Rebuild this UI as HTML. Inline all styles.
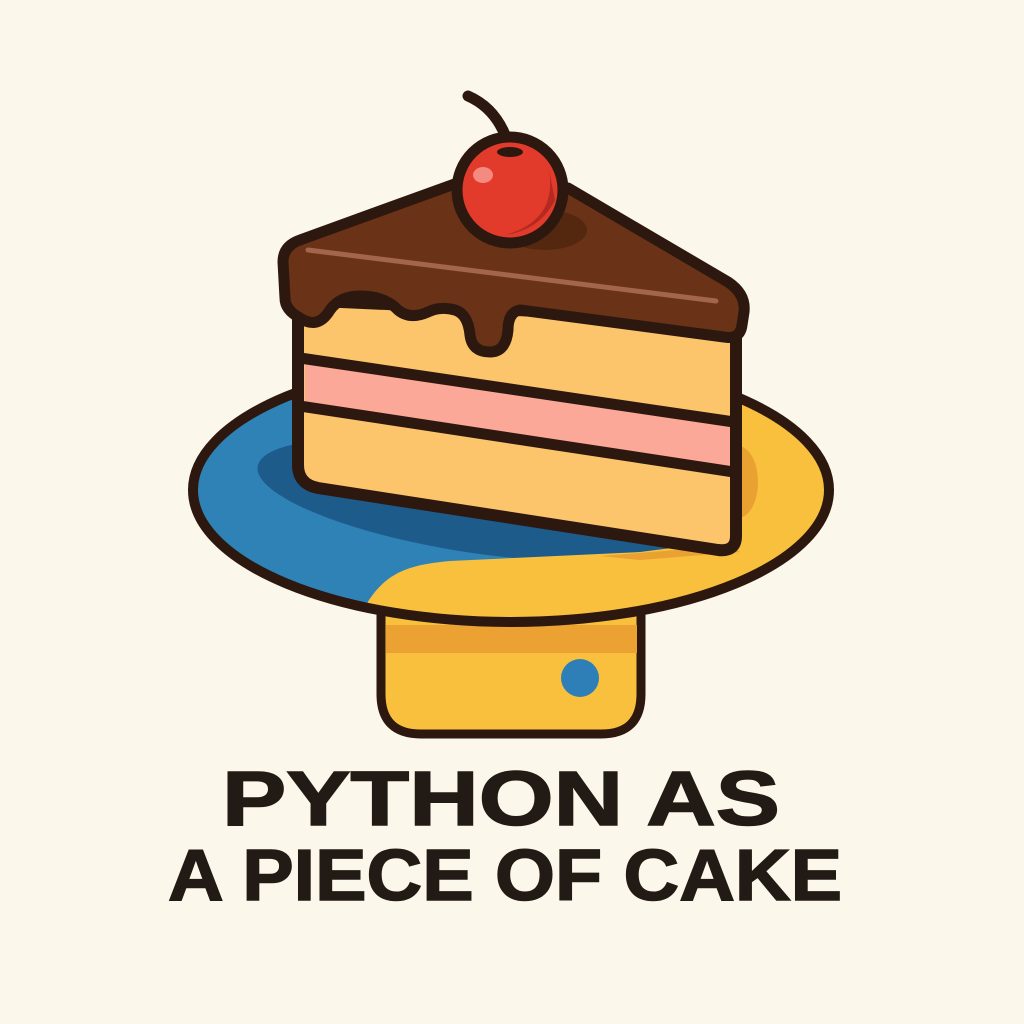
<!DOCTYPE html>
<html><head><meta charset="utf-8"><style>
html,body{margin:0;padding:0;background:#fcf7eb;}
svg{display:block}
</style></head><body>
<svg width="1024" height="1024" viewBox="0 0 1024 1024" xmlns="http://www.w3.org/2000/svg">
<rect width="1024" height="1024" fill="#fcf7eb"/>
<defs>
<clipPath id="plate"><ellipse cx="511" cy="490" rx="318" ry="132"/></clipPath>
</defs>
<!-- base -->
<path d="M381,600 L641,600 L641,694 Q641,734 601,734 L421,734 Q381,734 381,694 Z" fill="#f9c03e" stroke="#2d1810" stroke-width="9"/>
<rect x="386" y="625" width="251" height="28" fill="#eba233"/>
<circle cx="580" cy="678" r="19" fill="#2e7fb8"/>
<!-- plate -->
<ellipse cx="511" cy="490" rx="318" ry="132" fill="#2f82b6"/>
<g clip-path="url(#plate)">
<ellipse cx="470" cy="500" rx="215" ry="52" transform="rotate(9 470 500)" fill="#1d5b8b"/>
<path d="M362,612 C382,574 405,565 450,561 L640,552 L735,540 L740,300 L900,300 L900,720 L340,720 Z" fill="#f9c03e"/>
<ellipse cx="738" cy="482" rx="20" ry="36" fill="#e9a131"/>
<path d="M600,556 L730,546 L740,552 L640,560 Z" fill="#e9a131"/>
</g>
<ellipse cx="511" cy="490" rx="318" ry="132" fill="none" stroke="#2d1810" stroke-width="10"/>
<!-- cake body -->
<path d="M298,300 L736,320 L736,536 Q736,552 718,550 L318,488 Q298,484 298,465 Z" fill="#fcc56c" stroke="#2d1810" stroke-width="12" stroke-linejoin="round"/>
<path d="M305,360 L730,425 L730,468 L305,404 Z" fill="#fba899"/>
<path d="M300,358 L734,422" stroke="#2d1810" stroke-width="11"/>
<path d="M300,406 L734,472" stroke="#2d1810" stroke-width="11"/>
<!-- chocolate -->
<path d="M283,262 Q283,246 300,240 L460,182 L568,188 L728,282 Q746,294 744,312 L742,325 Q740,340 724,337 L520,310 Q508,312 508,330 Q506,352 490,352 Q472,352 470,335 Q468,314 455,310 Q440,306 428,312 Q410,320 398,310 Q385,296 360,296 Q340,296 330,310 Q318,330 300,318 Q285,310 285,298 Z" fill="#6a3317" stroke="#2d1810" stroke-width="11" stroke-linejoin="round"/>
<path d="M308,250 L716,301" stroke="#a3654c" stroke-width="5" stroke-linecap="round"/>
<ellipse cx="545" cy="230" rx="42" ry="20" fill="#54270f"/>
<!-- cherry -->
<path d="M468,96 Q500,110 510,150" fill="none" stroke="#2d1810" stroke-width="11" stroke-linecap="round"/>
<circle cx="510" cy="190" r="53" fill="#e23b2c" stroke="#2d1810" stroke-width="11"/>
<path d="M548,165 Q560,220 505,235 Q540,230 555,200 Z" fill="#b42a20"/>
<ellipse cx="483" cy="175" rx="10" ry="8" fill="#f58a80"/>
<ellipse cx="510" cy="152" rx="13" ry="5" fill="#2d1810"/>
<!-- text -->
<text x="222" y="825" textLength="558" lengthAdjust="spacingAndGlyphs" font-family="Liberation Sans, sans-serif" font-weight="bold" font-size="77" fill="#221a14" stroke="#221a14" stroke-width="1.5">PYTHON AS</text>
<text x="168" y="900" textLength="674" lengthAdjust="spacingAndGlyphs" font-family="Liberation Sans, sans-serif" font-weight="bold" font-size="72" fill="#221a14" stroke="#221a14" stroke-width="1.5">A PIECE OF CAKE</text>
</svg>
</body></html>
